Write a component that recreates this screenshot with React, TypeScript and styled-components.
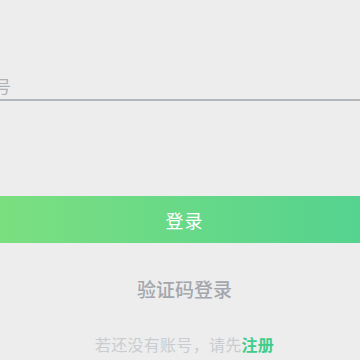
import React from "react";
import styled, { createGlobalStyle } from "styled-components";

const GlobalStyle = createGlobalStyle`
  html, body {
    margin: 0;
    padding: 0;
    background: #ededed;
    overflow: hidden;
  }
  body {
    font-family: "Noto Sans CJK SC", "Noto Sans", sans-serif;
  }
`;

const Page = styled.div`
  width: 360px;
  height: 360px;
  display: flex;
  flex-direction: column;
  overflow: hidden;
`;

const InputRow = styled.div`
  margin-top: 72px;
  height: 27px;
  display: flex;
  align-items: center;
  border-bottom: 2px solid #b4b7bc;
`;

const Placeholder = styled.span`
  margin-left: -74px;
  font-size: 17px;
  line-height: 27px;
  color: #aeb1b7;
  white-space: nowrap;
`;

const LoginButton = styled.button`
  margin-top: 95px;
  height: 47px;
  width: 100%;
  border: none;
  padding: 0 0 0 9px;
  background: linear-gradient(90deg, #7bdf80 0%, #55d38f 100%);
  color: #ffffff;
  font-family: inherit;
  font-size: 18px;
  font-weight: 400;
  letter-spacing: 1px;
`;

const CodeLogin = styled.div`
  margin-top: 34px;
  padding-left: 9px;
  text-align: center;
  font-size: 19px;
  line-height: 24px;
  color: #a3a7ad;
  font-weight: 500;
`;

const Footer = styled.div`
  margin-top: 32px;
  padding-left: 9px;
  text-align: center;
  font-size: 16px;
  letter-spacing: 0.3px;
  line-height: 22px;
  color: #c9ccd0;
`;

const RegisterLink = styled.span`
  color: #3dcc8b;
  font-weight: 700;
`;

export default function App() {
  return (
    <Page>
      <GlobalStyle />
      <InputRow>
        <Placeholder>请输入账号</Placeholder>
      </InputRow>
      <LoginButton>登录</LoginButton>
      <CodeLogin>验证码登录</CodeLogin>
      <Footer>
        若还没有账号，请先<RegisterLink>注册</RegisterLink>
      </Footer>
    </Page>
  );
}
